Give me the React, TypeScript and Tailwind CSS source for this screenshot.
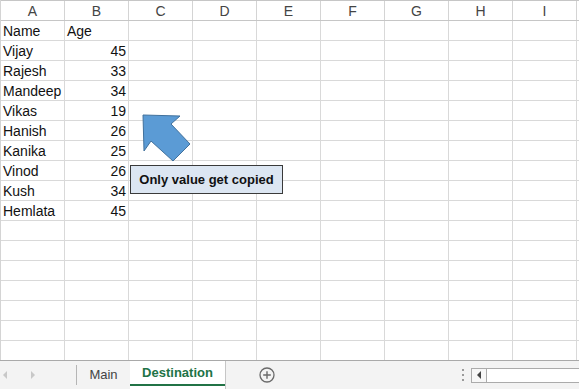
const cols = ['A', 'B', 'C', 'D', 'E', 'F', 'G', 'H', 'I']

const people: [string, string][] = [
  ['Name', 'Age'],
  ['Vijay', '45'],
  ['Rajesh', '33'],
  ['Mandeep', '34'],
  ['Vikas', '19'],
  ['Hanish', '26'],
  ['Kanika', '25'],
  ['Vinod', '26'],
  ['Kush', '34'],
  ['Hemlata', '45'],
]

const ROWS = 17

function Sheet() {
  return (
    <div className="relative h-[360px] overflow-hidden border-l border-[#d4d4d4]">
      {/* column headers */}
      <div className="flex h-[21px] border-t border-b border-[#c6c6c6] bg-white">
        {cols.map((c) => (
          <div
            key={c}
            className="flex w-[64px] shrink-0 items-center justify-center border-r border-[#d4d4d4] text-[14px] leading-none text-[#444]"
          >
            {c}
          </div>
        ))}
      </div>

      {/* cells */}
      {Array.from({ length: ROWS }).map((_, r) => {
        const row = people[r]
        return (
          <div key={r} className="flex h-[20px] border-b border-[#d9d9d9]">
            {cols.map((c, ci) => {
              let content: string = ''
              let align = 'justify-start pl-[2px]'
              if (row && ci === 0) content = row[0]
              if (row && ci === 1) {
                content = row[1]
                if (r > 0) align = 'justify-end pr-[2px]'
              }
              return (
                <div
                  key={c}
                  className={`flex w-[64px] shrink-0 items-center border-r border-[#d9d9d9] text-[14px] leading-none whitespace-nowrap text-[#111] ${align}`}
                >
                  {content}
                </div>
              )
            })}
          </div>
        )
      })}

      {/* arrow shape */}
      <svg className="absolute left-0 top-0" width="579" height="360">
        <polygon
          points="142,115 179,116 170,124 189,144 172,161 150,141 143,151"
          fill="#5b9bd5"
          stroke="#41719c"
          strokeWidth="1"
          strokeLinejoin="miter"
        />
      </svg>

      {/* callout */}
      <div className="absolute left-[129px] top-[165px] flex h-[29px] w-[153px] items-center justify-center border border-[#3a3a3a] bg-[#dce6f2] text-[13px] font-bold text-[#111]">
        Only value get copied
      </div>
    </div>
  )
}

function TabBar() {
  return (
    <div className="flex h-[29px] items-stretch border-t border-[#a9a9a9] bg-[#f3f3f3]">
      <div className="flex w-[76px] shrink-0 items-center">
        <svg width="76" height="28">
          <polygon points="7,10 7,18 3,14" fill="#c8c8c8" />
          <polygon points="31,10 31,18 35,14" fill="#c8c8c8" />
        </svg>
      </div>
      <div className="my-[4px] w-px shrink-0 bg-[#b5b5b5]" />
      <div className="flex w-[53px] shrink-0 items-center justify-center pb-[1px] text-[13px] text-[#444]">
        Main
      </div>
      <div className="flex w-[96px] shrink-0 flex-col border-r border-[#c6c6c6] bg-white">
        <div className="flex flex-1 items-center justify-center pt-[1px] text-[13px] font-bold text-[#217346]">
          Destination
        </div>
        <div className="mb-[3px] h-[2px] bg-[#217346]" />
      </div>
      <div className="flex w-[82px] shrink-0 items-center justify-center">
        <svg width="16" height="16" viewBox="0 0 16 16">
          <circle cx="8" cy="8" r="7" fill="none" stroke="#6a6a6a" strokeWidth="1.3" />
          <path d="M8 4.2v7.6M4.2 8h7.6" stroke="#6a6a6a" strokeWidth="1.4" />
        </svg>
      </div>
      <div className="flex-1" />
      <div className="flex w-[16px] shrink-0 flex-col items-center justify-center gap-[3px]">
        <div className="h-[2px] w-[2px] bg-[#9a9a9a]" />
        <div className="h-[2px] w-[2px] bg-[#9a9a9a]" />
        <div className="h-[2px] w-[2px] bg-[#9a9a9a]" />
      </div>
      <div className="flex w-[108px] shrink-0 items-center">
        <div className="flex h-[15px] w-full border border-r-0 border-[#ababab] bg-white">
          <div className="flex w-[15px] items-center justify-center border-r border-[#ababab] bg-[#f7f7f7]">
            <svg width="6" height="8">
              <polygon points="5,0 5,8 1,4" fill="#444" />
            </svg>
          </div>
        </div>
      </div>
    </div>
  )
}

export default function App() {
  return (
    <div
      className="h-[389px] w-[579px] overflow-hidden bg-white"
      style={{ fontFamily: '"Liberation Sans", Arial, sans-serif' }}
    >
      <Sheet />
      <TabBar />
    </div>
  )
}
